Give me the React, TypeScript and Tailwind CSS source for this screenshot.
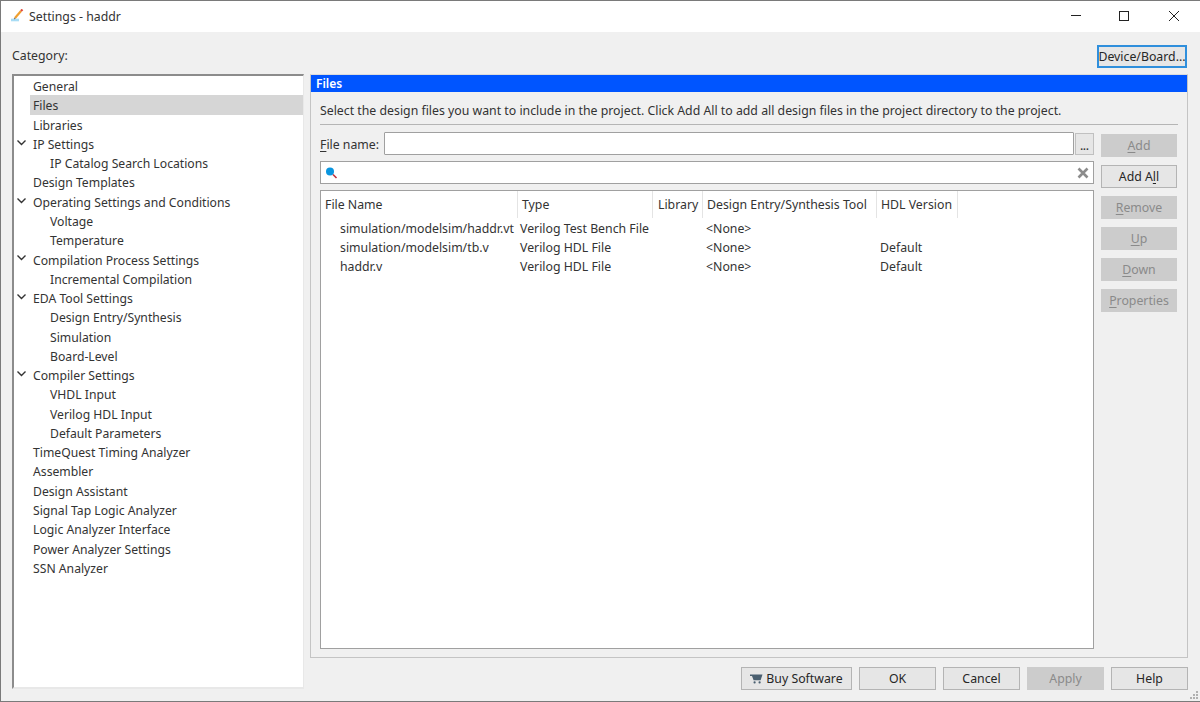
const font = 'font-["Noto_Sans",sans-serif]'

const tree: { label: string; depth: number; open?: boolean; selected?: boolean }[] = [
  { label: 'General', depth: 0 },
  { label: 'Files', depth: 0, selected: true },
  { label: 'Libraries', depth: 0 },
  { label: 'IP Settings', depth: 0, open: true },
  { label: 'IP Catalog Search Locations', depth: 1 },
  { label: 'Design Templates', depth: 0 },
  { label: 'Operating Settings and Conditions', depth: 0, open: true },
  { label: 'Voltage', depth: 1 },
  { label: 'Temperature', depth: 1 },
  { label: 'Compilation Process Settings', depth: 0, open: true },
  { label: 'Incremental Compilation', depth: 1 },
  { label: 'EDA Tool Settings', depth: 0, open: true },
  { label: 'Design Entry/Synthesis', depth: 1 },
  { label: 'Simulation', depth: 1 },
  { label: 'Board-Level', depth: 1 },
  { label: 'Compiler Settings', depth: 0, open: true },
  { label: 'VHDL Input', depth: 1 },
  { label: 'Verilog HDL Input', depth: 1 },
  { label: 'Default Parameters', depth: 1 },
  { label: 'TimeQuest Timing Analyzer', depth: 0 },
  { label: 'Assembler', depth: 0 },
  { label: 'Design Assistant', depth: 0 },
  { label: 'Signal Tap Logic Analyzer', depth: 0 },
  { label: 'Logic Analyzer Interface', depth: 0 },
  { label: 'Power Analyzer Settings', depth: 0 },
  { label: 'SSN Analyzer', depth: 0 },
]

const columns = [
  { label: 'File Name', cls: 'w-[197px] pl-[4px]' },
  { label: 'Type', cls: 'w-[135px] pl-[4px]' },
  { label: 'Library', cls: 'w-[50px] pl-[5px]' },
  { label: 'Design Entry/Synthesis Tool', cls: 'w-[174px] pl-[4px]' },
  { label: 'HDL Version', cls: 'w-[81px] pl-[4px]' },
]

const files = [
  ['simulation/modelsim/haddr.vt', 'Verilog Test Bench File', '<None>', ''],
  ['simulation/modelsim/tb.v', 'Verilog HDL File', '<None>', 'Default'],
  ['haddr.v', 'Verilog HDL File', '<None>', 'Default'],
]

function Btn({ children, off, cls }: { children: React.ReactNode; off?: boolean; cls: string }) {
  return (
    <div
      className={`h-[23px] flex items-center justify-center border ${cls} ${
        off ? 'bg-[#cccccc] border-[#cccccc] text-[#8a8a8a]' : 'bg-[#e6e6e6] border-[#b4b4b4] text-[#262626]'
      }`}
    >
      {children}
    </div>
  )
}

function U({ children }: { children: React.ReactNode }) {
  return <span className="underline underline-offset-2">{children}</span>
}

export default function App() {
  return (
    <div className={`w-[1200px] h-[702px] flex flex-col bg-[#f0f0f0] border-l border-t border-b border-[#7a7a7a] text-[12.3px] leading-[19px] text-[#333333] overflow-hidden relative ${font}`}>
      <div className="h-[31px] bg-white flex items-center shrink-0 text-[#333333]">
        <svg className="ml-[10px] w-[14px] h-[15px]" viewBox="0 0 14 15">
          <path d="M0 11h8" stroke="#a8dcf5" strokeWidth="2.6" />
          <path d="M4 9 10 2" stroke="#f0a030" strokeWidth="2.2" />
          <path d="M10 2 11.5 0.5" stroke="#e0483a" strokeWidth="2.2" />
          <path d="M3.2 10 4.2 8.8" stroke="#777777" strokeWidth="1.2" />
        </svg>
        <span className="ml-[4px]">Settings - haddr</span>
        <div className="ml-auto flex items-center mr-[3px] text-[#222222]">
          <svg className="w-[46px] h-[31px]" viewBox="0 0 46 31"><path d="M16 14.5h10" stroke="#222" strokeWidth="1" /></svg>
          <svg className="w-[50px] h-[31px]" viewBox="0 0 50 31"><rect x="18.5" y="10.5" width="9" height="9" fill="none" stroke="#222" /></svg>
          <svg className="w-[46px] h-[31px]" viewBox="0 0 46 31"><path d="M18 10l10 10M28 10l-10 10" stroke="#222" /></svg>
        </div>
      </div>

      <div className="flex-1 flex flex-col pl-[11px] pr-[12px]">
        <div className="h-[42px] shrink-0 flex items-center justify-between">
          <span className="mt-[5px]">Category:</span>
          <div className="mt-[6px] mr-[1px] w-[90px] h-[23px] flex items-center justify-center bg-[#e6e6e6] border-2 border-[#2f8fdc] text-[#262626] whitespace-nowrap">
            Device/Board...
          </div>
        </div>

        <div className="flex gap-[6px] h-[615px]">
          <div className="w-[292px] shrink-0 bg-white border-t-2 border-l-2 border-[#8c8c8c] border-r border-r-[#e8e8e8] border-b-2 border-b-[#e8e8e8] text-[12.2px]">
            {tree.map((r) => (
              <div key={r.label} className="h-[19.28px] flex items-center relative">
                {r.open && (
                  <svg className="absolute left-[2px] top-[5px] w-[11px] h-[8px]" viewBox="0 0 11 8">
                    <path d="M1.5 1.5 5.5 5.5 9.5 1.5" fill="none" stroke="#333" strokeWidth="1.4" />
                  </svg>
                )}
                <div className={`h-full flex items-center flex-1 ml-[16px] pl-[3px] ${r.selected ? 'bg-[#d6d6d6]' : ''}`}>
                  <span className={`mt-[2px] ${r.depth === 1 ? 'ml-[17px]' : ''}`}>{r.label}</span>
                </div>
              </div>
            ))}
          </div>

          <div className="flex-1 flex flex-col">
            <div className="h-[584px] shrink-0 flex flex-col border border-[#c4c4c4] border-t-[#dcdcdc]">
              <div className="h-[17px] shrink-0 bg-[#0055ff] text-white font-semibold flex items-center pl-[5px] text-[12px]">Files</div>
              <div className="flex-1 flex flex-col pl-[9px] pr-[9px]">
                <div className="h-[33px] shrink-0 flex items-center border-b border-[#b5b5b5] pt-[5px]">
                  Select the design files you want to include in the project. Click Add All to add all design files in the project directory to the project.
                </div>
                <div className="flex gap-[7px] flex-1">
                  <div className="w-[774px] flex flex-col">
                    <div className="h-[23px] mt-[7px] flex items-center">
                      <span className="w-[64px] shrink-0 mt-[2px]"><U>F</U>ile name:</span>
                      <div className="w-[690px] h-[23px] bg-white border border-[#a0a0a0] rounded-[1px]" />
                      <div className="ml-[1px] w-[19px] h-[22px] bg-[#e6e6e6] border border-[#c0c0c0] flex items-center justify-center text-[10px] font-bold leading-none pt-[4px]">...</div>
                    </div>
                    <div className="h-[23px] mt-[6px] w-[774px] bg-white border border-[#a0a0a0] flex items-center justify-between pl-[5px] pr-[4px]">
                      <svg className="w-[13px] h-[13px]" viewBox="0 0 13 13">
                        <circle cx="4" cy="5.5" r="4" fill="#0a96e0" />
                        <path d="M7 8.5 10.5 12" stroke="#c0303a" strokeWidth="1.6" />
                      </svg>
                      <svg className="w-[12px] h-[12px]" viewBox="0 0 12 12">
                        <path d="M1.5 1.5 10.5 10.5M10.5 1.5 1.5 10.5" stroke="#8c8c8c" strokeWidth="2.6" />
                      </svg>
                    </div>
                    <div className="mt-[6px] w-[774px] h-[459px] bg-white border border-[#a0a0a0] flex flex-col">
                      <div className="h-[27px] flex shrink-0">
                        {columns.map((c) => (
                          <div key={c.label} className={`${c.cls} shrink-0 flex items-center border-r border-[#e4e4e4] whitespace-nowrap`}>{c.label}</div>
                        ))}
                      </div>
                      <div className="pt-[1px]">
                        {files.map((f) => (
                          <div key={f[0]} className="h-[19.2px] flex items-center">
                            <span className="w-[197px] pl-[19px] shrink-0 whitespace-nowrap">{f[0]}</span>
                            <span className="w-[185px] pl-[2px] shrink-0">{f[1]}</span>
                            <span className="w-[174px] pl-[3px] shrink-0">{f[2]}</span>
                            <span className="pl-[3px]">{f[3]}</span>
                          </div>
                        ))}
                      </div>
                    </div>
                  </div>
                  <div className="w-[76px] flex flex-col gap-[8px] pt-[9px]">
                    <Btn off cls="w-[76px]"><U>A</U>dd</Btn>
                    <Btn cls="w-[76px]">Add A<U>l</U>l</Btn>
                    <Btn off cls="w-[76px]"><U>R</U>emove</Btn>
                    <Btn off cls="w-[76px]"><U>U</U>p</Btn>
                    <Btn off cls="w-[76px]"><U>D</U>own</Btn>
                    <Btn off cls="w-[76px]"><U>P</U>roperties</Btn>
                  </div>
                </div>
              </div>
            </div>

            <div className="flex justify-end gap-[7px] mt-[9px]">
              <Btn cls="w-[111px] gap-[3px]">
                <svg className="w-[13px] h-[10px]" viewBox="0 0 13 10">
                  <path d="M0 0.5H12.5L10.6 6.2H3.6L2 2H0Z" fill="#4a5f70" />
                  <circle cx="4.6" cy="8.4" r="1.1" fill="#4a5f70" />
                  <circle cx="9.6" cy="8.4" r="1.1" fill="#4a5f70" />
                </svg>
                Buy Software
              </Btn>
              <Btn cls="w-[77px]">OK</Btn>
              <Btn cls="w-[77px]">Cancel</Btn>
              <Btn off cls="w-[77px]">Apply</Btn>
              <Btn cls="w-[77px]">Help</Btn>
            </div>
          </div>
        </div>
      </div>

      <svg className="absolute right-[1px] bottom-[1px] w-[9px] h-[9px]" viewBox="0 0 9 9" fill="#b0b0b0">
        <rect x="6" y="0" width="2" height="2" />
        <rect x="3" y="3" width="2" height="2" />
        <rect x="6" y="3" width="2" height="2" />
        <rect x="0" y="6" width="2" height="2" />
        <rect x="3" y="6" width="2" height="2" />
        <rect x="6" y="6" width="2" height="2" />
      </svg>
    </div>
  )
}
